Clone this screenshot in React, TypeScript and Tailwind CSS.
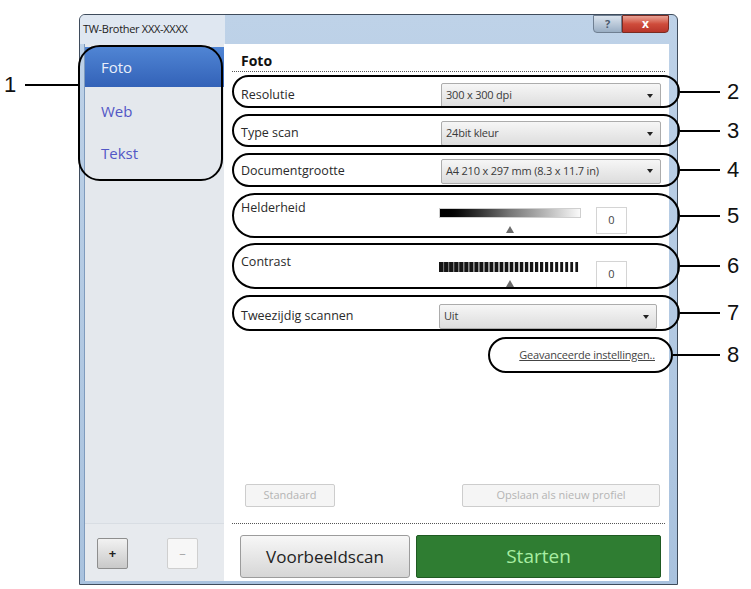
import React from 'react';

const ui = "font-['Open_Sans','Noto_Sans',sans-serif]";

function Dropdown({ value, width = 'w-[220px]' }: { value: string; width?: string }) {
  return (
    <div className={`${width} h-[25px] flex items-center justify-between border border-[#acacac] rounded-[2px] bg-gradient-to-b from-[#f6f6f6] to-[#dddddd] pl-[4px] pr-[7px]`}>
      <span className="text-[11px] text-[#3a3a3a] tracking-[-0.2px]">{value}</span>
      <span className="w-0 h-0 border-x-[3px] border-x-transparent border-t-[4px] border-t-[#222]" />
    </div>
  );
}

function Slider({ kind }: { kind: 'gradient' | 'bars' }) {
  const bars = Array.from({ length: 28 }, (_, i) => i);
  return (
    <div className="flex items-start">
      <div className="flex flex-col items-center w-[142px] pt-[8px]">
        {kind === 'gradient' ? (
          <div className="w-[142px] h-[10px] border border-[#cfcfcf] bg-gradient-to-r from-[#000] via-[#777] to-[#fafafa]" />
        ) : (
          <svg width="142" height="10" viewBox="0 0 142 10">
            {bars.map(i => (
              <rect key={i} x={i * 5.05} y={0} width={4.6 - i * 0.07} height={10} fill="#141414" />
            ))}
          </svg>
        )}
        <svg className="mt-[8px]" width="8" height="7" viewBox="0 0 8 7">
          <polygon points="4,0 8,7 0,7" fill="#6b6b6b" />
        </svg>
      </div>
      <div className="ml-[15px] mt-[7px] w-[31px] h-[27px] border border-[#d4d4d4] bg-white flex items-center justify-center text-[11px] text-[#444]">
        0
      </div>
    </div>
  );
}

function Window() {
  return (
    <div className={`${ui} w-[599px] h-[571px] border border-[#3f4c5c] rounded-t-[6px] bg-gradient-to-b from-[#bed2e8] to-[#a9c2de] flex flex-col`}>
      {/* Title bar */}
      <div className="h-[29px] flex items-start shrink-0">
        <div className="w-[145px] h-[29px] bg-[#dfe7f1] pl-[3px] pt-[6px] text-[11px] text-[#222] tracking-[-0.3px] rounded-tl-[5px]">
          TW-Brother XXX-XXXX
        </div>
        <div className="flex-1" />
        <div className="flex">
          <div className="w-[29px] h-[18px] border border-[#6f7f92] rounded-bl-[4px] bg-gradient-to-b from-[#dbe4ee] to-[#9aaec4] flex items-center justify-center text-[11px] font-bold text-[#4a5a6e]">
            ?
          </div>
          <div className="w-[47px] h-[18px] border border-[#7a2b22] rounded-br-[4px] bg-gradient-to-b from-[#e8a195] via-[#cf4c3b] to-[#b8352a] flex items-center justify-center text-[12px] font-bold text-white">
            x
          </div>
        </div>
        <div className="w-[8px]" />
      </div>

      {/* Body */}
      <div className="flex-1 flex pl-[4px] pr-[8px] pb-[3px]">
        {/* Sidebar */}
        <div className="w-[140px] bg-[#e4e8ed] flex flex-col border-l border-[#7f9bbd]">
          <div className="mt-[3px] h-[40px] bg-gradient-to-b from-[#5085d4] to-[#3362b8] flex items-center pl-[16px] text-[15px] text-[#e9effa]">
            Foto
          </div>
          <div className="mt-[3px] h-[42px] flex items-center pl-[16px] text-[15px] text-[#5257c6]">Web</div>
          <div className="h-[42px] flex items-center pl-[16px] text-[15px] text-[#5257c6]">Tekst</div>
          <div className="flex-1" />
          <div className="h-[58px] border-t border-[#d8dde3] bg-[#e7eaee] flex items-start pt-[14px] pl-[12px] gap-[39px]">
            <div className="w-[31px] h-[31px] border border-[#8e8e8e] rounded-[2px] bg-gradient-to-b from-[#f2f2f2] to-[#c9c9c9] flex items-center justify-center text-[13px] font-bold text-[#222]">
              +
            </div>
            <div className="w-[31px] h-[31px] border border-[#cfcfcf] rounded-[2px] bg-[#f7f7f7] flex items-center justify-center text-[13px] text-[#aaa]">
              –
            </div>
          </div>
        </div>

        {/* Content */}
        <div className="flex-1 bg-white flex flex-col pl-[17px] pr-[8px]">
          <div className="mt-[8px] h-[18px] text-[14px] font-bold leading-[18px] text-[#111]">Foto</div>
          <div className="-ml-[9px] mr-[-4px] mt-[1px] border-b border-dotted border-[#555]" />

          <div className="mt-[11px] h-[25px] flex items-center">
            <div className="w-[200px] text-[12.5px] text-[#2a2a2a]">Resolutie</div>
            <Dropdown value="300 x 300 dpi" />
          </div>
          <div className="mt-[13px] h-[25px] flex items-center">
            <div className="w-[200px] text-[12.5px] text-[#2a2a2a]">Type scan</div>
            <Dropdown value="24bit kleur" />
          </div>
          <div className="mt-[12px] h-[26px] flex items-center">
            <div className="w-[200px] text-[12.5px] text-[#2a2a2a]">Documentgrootte</div>
            <Dropdown value="A4 210 x 297 mm (8.3 x 11.7 in)" />
          </div>

          <div className="mt-[16px] h-[36px] flex items-start">
            <div className="w-[198px] text-[12.5px] leading-[16px] text-[#2a2a2a]">Helderheid</div>
            <Slider kind="gradient" />
          </div>
          <div className="mt-[18px] h-[36px] flex items-start">
            <div className="w-[198px] text-[12.5px] leading-[16px] text-[#2a2a2a]">Contrast</div>
            <Slider kind="bars" />
          </div>

          <div className="mt-[14px] h-[25px] flex items-center">
            <div className="w-[198px] text-[12.5px] text-[#2a2a2a]">Tweezijdig scannen</div>
            <Dropdown value="Uit" width="w-[218px]" />
          </div>

          <div className="mt-[18px] h-[16px] flex justify-end pr-[6px]">
            <span className="text-[11px] text-[#444] underline tracking-[-0.2px]">Geavanceerde instellingen..</span>
          </div>

          <div className="flex-1" />

          <div className="h-[23px] flex justify-between pl-[4px] pr-[1px]">
            <div className="w-[90px] h-[23px] border border-[#cdcdcd] rounded-[2px] bg-[#f5f5f5] flex items-center justify-center text-[11px] text-[#b4b4b4]">
              Standaard
            </div>
            <div className="w-[198px] h-[23px] border border-[#cdcdcd] rounded-[2px] bg-[#f5f5f5] flex items-center justify-center text-[11px] text-[#b4b4b4]">
              Opslaan als nieuw profiel
            </div>
          </div>
          <div className="mt-[16px] -ml-[9px] mr-[-4px] border-b border-dotted border-[#555]" />
          <div className="mt-[11px] h-[43px] flex gap-[6px] -ml-[1px] mb-[3px]">
            <div className="w-[170px] border border-[#9c9c9c] rounded-[3px] bg-gradient-to-b from-[#f7f7f7] to-[#d6d6d6] flex items-center justify-center text-[17px] text-[#222]">
              Voorbeeldscan
            </div>
            <div className="flex-1 border border-[#1f5a22] rounded-[2px] bg-[#2f7d32] flex items-center justify-center text-[19px] text-[#a8eda2]">
              Starten
            </div>
          </div>
        </div>
      </div>
    </div>
  );
}

function Callouts() {
  const num = "absolute font-['Liberation_Sans',Arial,sans-serif] text-[22px] leading-[24px] text-[#111]";
  const oval = 'absolute border-[2.5px] border-black';
  const rows = [
    { n: '2', top: 75, h: 33 },
    { n: '3', top: 114, h: 33 },
    { n: '4', top: 153, h: 34 },
    { n: '5', top: 193, h: 45 },
    { n: '6', top: 243, h: 46 },
    { n: '7', top: 295, h: 36 },
  ];
  return (
    <div className="absolute inset-0 pointer-events-none">
      {/* 1 */}
      <div className={`${oval} left-[78px] top-[45px] w-[145px] h-[136px] rounded-[22px]`} />
      <div className="absolute left-[25px] top-[84px] w-[53px] h-[2px] bg-black" />
      <div className={`${num} left-[4px] top-[73px]`}>1</div>

      {rows.map(r => (
        <React.Fragment key={r.n}>
          <div
            className={`${oval} left-[232px] w-[448px] rounded-[24px]`}
            style={{ top: r.top, height: r.h }}
          />
          <div className="absolute left-[680px] w-[40px] h-[2px] bg-black" style={{ top: r.top + r.h / 2 - 1 }} />
          <div className={`${num} left-[727px]`} style={{ top: r.top + r.h / 2 - 12 }}>{r.n}</div>
        </React.Fragment>
      ))}

      {/* 8 */}
      <div className={`${oval} left-[488px] top-[337px] w-[185px] h-[36px] rounded-[18px]`} />
      <div className="absolute left-[673px] top-[354px] w-[47px] h-[2px] bg-black" />
      <div className={`${num} left-[727px] top-[343px]`}>8</div>
    </div>
  );
}

export default function App() {
  return (
    <div className="relative w-[751px] h-[589px] bg-white overflow-hidden">
      <div className="pt-[14px] pl-[79px]">
        <Window />
      </div>
      <Callouts />
    </div>
  );
}
